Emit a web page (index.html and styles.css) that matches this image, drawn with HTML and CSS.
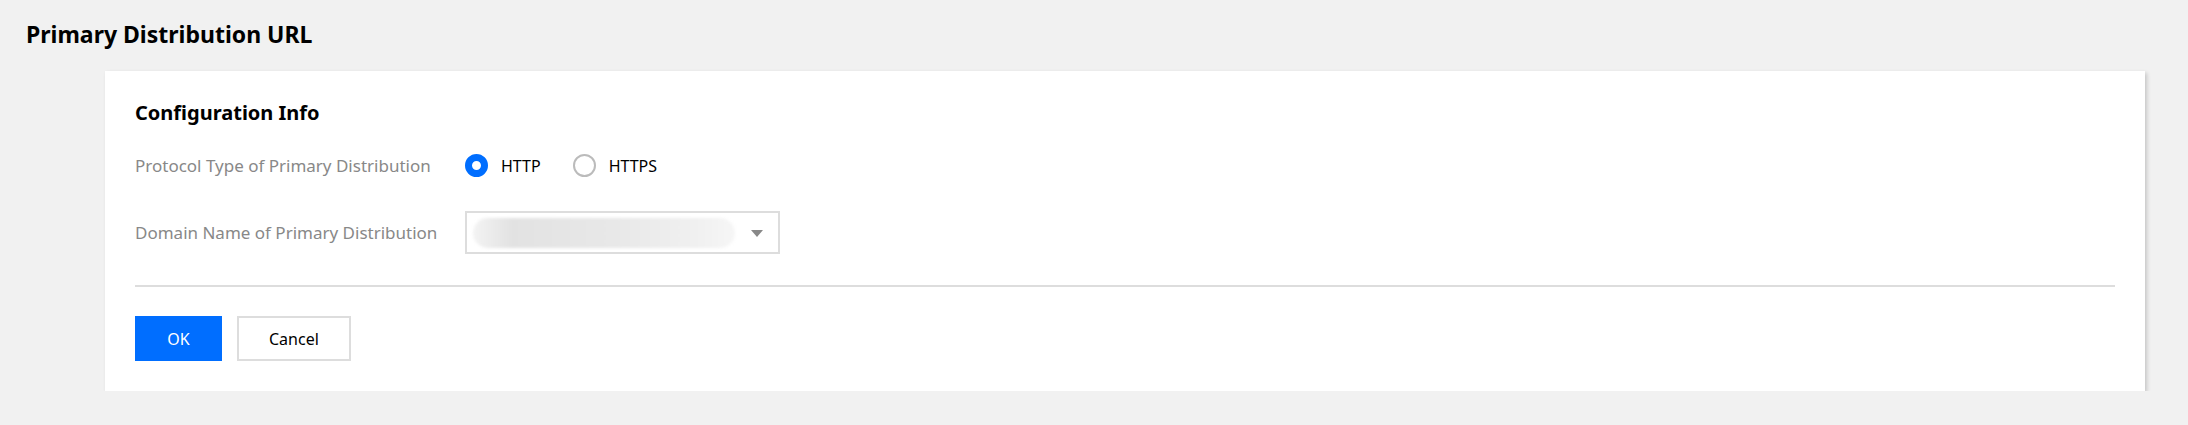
FILE: index.html
```html
<!DOCTYPE html>
<html lang="en">
<head>
    <meta charset="UTF-8">
    <title>Primary Distribution URL</title>
    <link rel="stylesheet" href="styles.css">
</head>
<body>
    <h1 class="page-title">Primary Distribution URL</h1>
    <div class="card">
        <h2 class="card-title">Configuration Info</h2>
        <div class="form-row">
            <label class="form-label">Protocol Type of Primary Distribution</label>
            <div class="radio-group">
                <label class="radio checked"><span class="radio-dot"></span>HTTP</label>
                <label class="radio"><span class="radio-dot"></span>HTTPS</label>
            </div>
        </div>
        <div class="form-row">
            <label class="form-label">Domain Name of Primary Distribution</label>
            <div class="select">
                <span class="select-value"></span>
                <span class="select-arrow"></span>
            </div>
        </div>
        <hr class="divider">
        <div class="actions">
            <button class="btn btn-primary">OK</button>
            <button class="btn">Cancel</button>
        </div>
    </div>
</body>
</html>
```

FILE: styles.css
```css
body {
    margin: 0;
    background-color: #f1f1f1;
    font-family: "Noto Sans", "Open Sans", Arial, sans-serif;
    color: #000;
}
.page-title {
    margin: 0;
    padding: 19px 26px 0;
    font-size: 23px;
    line-height: 30px;
    font-weight: bold;
}
.card {
    margin: 22px 43px 0 105px;
    padding: 28px 30px 30px;
    background: #fff;
    box-shadow: 2px 2px 4px rgba(0, 0, 0, 0.18);
}
.card-title {
    margin: 0 0 17px;
    font-size: 20px;
    line-height: 28px;
    font-weight: bold;
}
.form-row {
    display: flex;
    align-items: center;
    height: 43px;
    margin-bottom: 24px;
}
.form-label {
    width: 330px;
    font-size: 17px;
    color: #888;
}
.radio-group {
    display: flex;
    gap: 32px;
}
.radio {
    display: flex;
    align-items: center;
    gap: 13px;
    font-size: 16px;
    color: #000;
}
.radio-dot {
    width: 23px;
    height: 23px;
    box-sizing: border-box;
    border: 2px solid #bbb;
    border-radius: 50%;
}
.radio.checked .radio-dot {
    border: 7px solid #006eff;
}
.select {
    position: relative;
    width: 315px;
    height: 43px;
    box-sizing: border-box;
    border: 2px solid #ddd;
}
.select-value {
    position: absolute;
    left: 6px;
    top: 5px;
    width: 262px;
    height: 30px;
    border-radius: 15px;
    background: linear-gradient(90deg, #f3f3f3, #e2e2e2 15%, #e8e8e8 55%, #f0f0f0 85%, #f6f6f6);
    filter: blur(1.5px);
}
.select-arrow {
    position: absolute;
    right: 15px;
    top: 17px;
    border-left: 6px solid transparent;
    border-right: 6px solid transparent;
    border-top: 7px solid #888;
}
.divider {
    margin: 31px 0 29px;
    border: 0;
    border-top: 2px solid #ddd;
}
.actions {
    display: flex;
    gap: 15px;
}
.btn {
    height: 45px;
    min-width: 87px;
    padding: 0 30px;
    border: 2px solid #ddd;
    background: #fff;
    font-family: inherit;
    font-size: 16px;
    color: #000;
}
.btn-primary {
    border-color: #006eff;
    background: #006eff;
    color: #fff;
}
```
